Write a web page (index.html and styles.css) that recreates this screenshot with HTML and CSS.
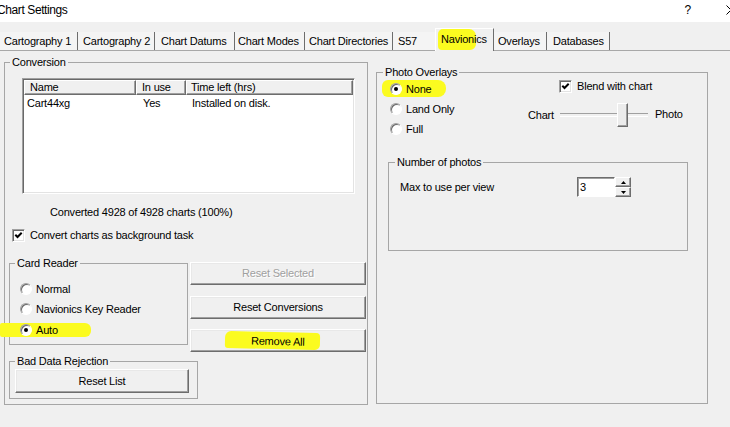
FILE: index.html
```html
<!DOCTYPE html>
<html lang="en">
<head>
<meta charset="utf-8">
<title>Chart Settings</title>
<link rel="stylesheet" href="styles.css">
</head>
<body>
<div class="window">
  <header class="titlebar">
    <span class="title">Chart Settings</span>
    <span class="help">?</span>
    <svg class="close" width="10" height="10" viewBox="0 0 10 10"><path d="M0.5 0.5L9.5 9.5M9.5 0.5L0.5 9.5" stroke="#000" stroke-width="1" fill="none"/></svg>
  </header>
  <nav class="tabs">
    <div class="tab t1">Cartography 1</div>
    <div class="tab t2">Cartography 2</div>
    <div class="tab t3">Chart Datums</div>
    <div class="tab t4">Chart Modes</div>
    <div class="tab t5">Chart Directories</div>
    <div class="tab t6">S57</div>
    <div class="tab sel"><span class="hl hl-tab">Navion</span>ics</div>
    <div class="tab t8">Overlays</div>
    <div class="tab t9">Databases</div>
  </nav>
  <main class="panel">
    <fieldset class="group conv">
      <legend>Conversion</legend>
      <div class="conv-body">
        <div class="list">
          <div class="lv-head">
            <div class="hc c1">Name</div>
            <div class="hc c2">In use</div>
            <div class="hc c3">Time left (hrs)</div>
          </div>
          <div class="lv-row">
            <div class="rc c1">Cart44xg</div>
            <div class="rc c2">Yes</div>
            <div class="rc c3">Installed on disk.</div>
          </div>
        </div>
        <div class="converted">Converted 4928 of 4928 charts (100%)</div>
        <div class="check bg-task"><span class="cb"><svg width="11" height="11" viewBox="0 0 11 11"><path d="M2.3 4.8L4.5 7L8.7 2.8" stroke="#000" stroke-width="2" fill="none"/></svg></span>Convert charts as background task</div>
        <div class="lower">
          <fieldset class="group card">
            <legend>Card Reader</legend>
            <div class="card-body">
              <div class="radio-row"><span class="rb"></span>Normal</div>
              <div class="radio-row"><span class="rb"></span>Navionics Key Reader</div>
              <div class="radio-row"><span class="hl hl-auto"><span class="rb on"></span>Auto</span></div>
            </div>
          </fieldset>
          <div class="buttons">
            <button class="btn disabled">Reset Selected</button>
            <button class="btn">Reset Conversions</button>
            <button class="btn"><span class="hl hl-remove">Remove All</span></button>
          </div>
          <fieldset class="group bad">
            <legend>Bad Data Rejection</legend>
            <div class="bad-body">
              <button class="btn reset-list">Reset List</button>
            </div>
          </fieldset>
        </div>
      </div>
    </fieldset>
    <fieldset class="group photo">
      <legend>Photo Overlays</legend>
      <div class="photo-body">
        <div class="photo-top">
          <div class="radios">
            <div class="radio-row"><span class="hl hl-none"><span class="rb on"></span>None</span></div>
            <div class="radio-row"><span class="rb"></span>Land Only</div>
            <div class="radio-row"><span class="rb"></span>Full</div>
          </div>
          <div class="blend">
            <div class="check blend-check"><span class="cb"><svg width="11" height="11" viewBox="0 0 11 11"><path d="M2.3 4.8L4.5 7L8.7 2.8" stroke="#000" stroke-width="2" fill="none"/></svg></span>Blend with chart</div>
            <div class="slider-row">
              <span class="sl-label">Chart</span>
              <div class="track"><span class="thumb"></span></div>
              <span class="sl-label photo-lbl">Photo</span>
            </div>
          </div>
        </div>
        <fieldset class="group count">
          <legend>Number of photos</legend>
          <div class="count-body">
            <span class="count-label">Max to use per view</span>
            <div class="spin">
              <span class="spin-val">3</span>
              <div class="spin-btns">
                <span class="spin-btn"><svg width="5" height="3" viewBox="0 0 5 3"><path d="M2.5 0L5 3H0Z" fill="#000"/></svg></span>
                <span class="spin-btn"><svg width="5" height="3" viewBox="0 0 5 3"><path d="M0 0H5L2.5 3Z" fill="#000"/></svg></span>
              </div>
            </div>
          </div>
        </fieldset>
      </div>
    </fieldset>
  </main>
</div>
</body>
</html>
```

FILE: styles.css
```css
* { box-sizing: border-box; }

html, body {
  margin: 0;
  padding: 0;
}

body {
  background: #f0f0f0;
  font-family: "Liberation Sans", Arial, sans-serif;
  font-size: 11px;
  letter-spacing: -0.2px;
  color: #000;
  overflow: hidden;
}

.window {
  width: 730px;
  height: 427px;
  overflow: hidden;
}

/* Title bar */
.titlebar {
  height: 22px;
  background: #fff;
  display: flex;
  align-items: center;
  padding-bottom: 2px;
}
.title {
  flex: 1;
  min-width: 0;
  margin-left: -3px;
  font-size: 12px;
  letter-spacing: -0.4px;
}
.help {
  flex-shrink: 0;
  font-size: 12px;
  margin-right: 35px;
}
.close {
  flex-shrink: 0;
  margin-right: -6px;
}

/* Tabs */
.tabs {
  height: 28px;
  display: flex;
  align-items: flex-end;
}
.tab {
  flex-shrink: 0;
  height: 18px;
  line-height: 19px;
  padding-left: 5px;
  border-right: 1px solid #6d6d6d;
  white-space: nowrap;
  background: #f4f4f4;
}
.t1 { width: 78px; padding-left: 4px; }
.t2 { width: 77px; }
.t3 { width: 80px; padding-left: 6px; }
.t4 { width: 70px; padding-left: 3px; }
.t5 { width: 88px; padding-left: 4px; }
.t6 { width: 46px; padding-left: 5px; }
.t8 { width: 55px; padding-left: 6px; }
.t9 { width: 63px; padding-left: 6px; }
.tab.sel {
  position: relative;
  z-index: 1;
  width: 59px;
  height: 23px;
  line-height: 20px;
  margin: 0 -2px -1px -4px;
  padding-left: 5px;
  background: #f0f0f0;
  border-top: 1px solid #fff;
  border-left: 1px solid #fff;
  border-right: 1px solid #6d6d6d;
}

/* Highlighter marks */
.hl {
  background: #fbfb20;
}
.hl-tab {
  padding: 4px 2px 5px 3px;
  margin: 0 -2px 0 -3px;
  border-radius: 5px 7px 6px 4px;
}

/* Panel */
.panel {
  display: flex;
  align-items: flex-start;
  height: 377px;
  border-top: 1px solid #a8a8a8;
  padding-top: 5px;
}

.group {
  margin: 0;
  padding: 0;
  min-width: 0;
  border: 1px solid #a6a6a6;
}
.group legend {
  padding: 0 2px;
  margin-left: 6px;
  line-height: 13px;
}

.conv {
  width: 364px;
  height: 349px;
  margin-left: 4px;
}
.conv legend { margin-left: 5px; }

.conv-body {
  display: flex;
  flex-direction: column;
  align-items: flex-start;
}

/* List view */
.list {
  margin: 9px 0 0 17px;
  width: 333px;
  height: 116px;
  background: #fff;
  border: 1px solid;
  border-color: #a0a0a0 #fff #fff #a0a0a0;
  box-shadow: inset 1px 1px 0 #696969, inset -1px -1px 0 #e3e3e3;
  padding: 1px;
}
.lv-head {
  display: flex;
  height: 15px;
}
.hc {
  height: 15px;
  line-height: 13px;
  background: #f0f0f0;
  border-top: 1px solid #fff;
  border-left: 1px solid #fff;
  border-right: 1px solid #6d6d6d;
  border-bottom: 1px solid #6d6d6d;
  box-shadow: inset -1px -1px 0 #a0a0a0;
  white-space: nowrap;
}
.lv-row {
  display: flex;
  height: 17px;
  line-height: 17px;
}
.c1 { width: 112px; }
.c2 { width: 50px; }
.c3 { width: 167px; }
.hc.c1 { padding-left: 5px; }
.hc.c2 { padding-left: 5px; }
.hc.c3 { padding-left: 4px; }
.rc.c1 { padding-left: 3px; }
.rc.c2 { padding-left: 7px; }
.rc.c3 { padding-left: 6px; }

.converted {
  margin: 12px 0 0 45px;
  line-height: 13px;
}

/* Checkboxes */
.check {
  display: flex;
  align-items: center;
  line-height: 13px;
  white-space: nowrap;
}
.cb {
  width: 13px;
  height: 13px;
  flex-shrink: 0;
  margin-right: 5px;
  background: #fff;
  border: 1px solid;
  border-color: #a0a0a0 #fff #fff #a0a0a0;
  box-shadow: inset 1px 1px 0 #696969, inset -1px -1px 0 #e3e3e3;
  display: flex;
}
.bg-task {
  margin: 10px 0 0 7px;
}

/* Lower grid */
.lower {
  margin: 15px 0 0 4px;
  display: grid;
  grid-template-columns: 181px 176px;
  align-items: start;
}
.card {
  width: 179px;
  height: 88px;
}
.card-body {
  padding: 9px 0 0 10px;
}
.radio-row {
  display: flex;
  align-items: center;
  height: 20px;
  white-space: nowrap;
}
.rb {
  position: relative;
  width: 12px;
  height: 12px;
  flex-shrink: 0;
  margin-right: 4px;
  border-radius: 50%;
  background: #fff;
  border: 1px solid;
  border-color: #a0a0a0 #fff #fff #a0a0a0;
  box-shadow: inset 1px 1px 0 #696969;
}
.rb.on::after {
  content: "";
  position: absolute;
  left: 3px;
  top: 3px;
  width: 4px;
  height: 4px;
  border-radius: 50%;
  background: #000;
}
.hl-auto {
  display: inline-flex;
  align-items: center;
  height: 14px;
  padding: 0 33px 0 20px;
  margin-left: -20px;
  margin-top: 2px;
  border-radius: 2px 6px 6px 2px;
}
.hl-none {
  display: inline-flex;
  align-items: center;
  height: 17px;
  padding: 0 14px 0 8px;
  margin-left: -8px;
  border-radius: 6px 8px 8px 6px;
}

.buttons {
  display: flex;
  flex-direction: column;
  padding-top: 4.5px;
}
.btn {
  font: inherit;
  letter-spacing: inherit;
  color: #000;
  height: 23px;
  width: 176px;
  padding: 0;
  margin: 0;
  background: #f0f0f0;
  border: 1px solid;
  border-color: #fff #6d6d6d #6d6d6d #fff;
  box-shadow: inset -1px -1px 0 #a0a0a0, inset 1px 1px 0 #e8e8e8;
  display: flex;
  align-items: center;
  justify-content: center;
}
.buttons .btn + .btn { margin-top: 11px; }
.buttons .btn:last-child { margin-top: 10px; }
.btn.disabled {
  color: #a0a0a0;
  text-shadow: 1px 1px 0 #fff;
}
.hl-remove {
  display: inline-block;
  padding: 3px 15px 2px 26px;
  margin: 1px -15px 0 -26px;
  border-radius: 6px 4px 5px 3px;
  transform: rotate(1.3deg);
}

.bad {
  grid-column: 1 / span 2;
  width: 189px;
  height: 44px;
  margin-top: 3.5px;
}
.bad-body {
  padding: 1px 0 0 5px;
}
.reset-list {
  width: 174px;
  height: 24px;
}

/* Photo overlays */
.photo {
  width: 332px;
  height: 338.5px;
  margin: 9.5px 0 0 8px;
}
.photo-top {
  display: flex;
}
.radios {
  width: 150px;
  padding-left: 13px;
}
.blend {
  display: flex;
  flex-direction: column;
}
.blend-check {
  height: 16px;
  padding-left: 32px;
}
.slider-row {
  display: flex;
  align-items: center;
  height: 24px;
  margin-top: 8px;
}
.sl-label {
  padding-left: 1px;
  margin-top: 1px;
}
.photo-lbl {
  margin-left: 6px;
  margin-top: -2px;
}
.track {
  position: relative;
  width: 88px;
  height: 24px;
  margin-left: 6px;
}
.track::before {
  content: "";
  position: absolute;
  left: 0;
  right: 0;
  top: 10px;
  height: 2px;
  border-top: 1px solid #a0a0a0;
  border-bottom: 1px solid #fff;
}
.thumb {
  position: absolute;
  left: 57px;
  top: 0;
  width: 11px;
  height: 24px;
  background: #ececec;
  border: 1px solid;
  border-color: #fff #6d6d6d #6d6d6d #fff;
  box-shadow: inset -1px -1px 0 #a0a0a0;
}

.count {
  width: 300px;
  height: 95.5px;
  margin: 17px 0 0 11px;
}
.count-body {
  display: flex;
  align-items: center;
  margin-top: 8.5px;
  height: 20px;
}
.count-label {
  width: 188px;
  padding-left: 11px;
}
.spin {
  display: flex;
  height: 20px;
}
.spin-val {
  width: 38px;
  height: 20px;
  line-height: 18px;
  padding-left: 2px;
  background: #fff;
  border: 1px solid;
  border-color: #6d6d6d #fff #fff #6d6d6d;
  box-shadow: inset 1px 1px 0 #a0a0a0;
}
.spin-btns {
  display: flex;
  flex-direction: column;
  width: 16px;
}
.spin-btn {
  height: 10px;
  display: flex;
  align-items: center;
  justify-content: center;
  background: #f0f0f0;
  border: 1px solid;
  border-color: #fff #6d6d6d #6d6d6d #fff;
  box-shadow: inset -1px -1px 0 #a0a0a0;
}
```
